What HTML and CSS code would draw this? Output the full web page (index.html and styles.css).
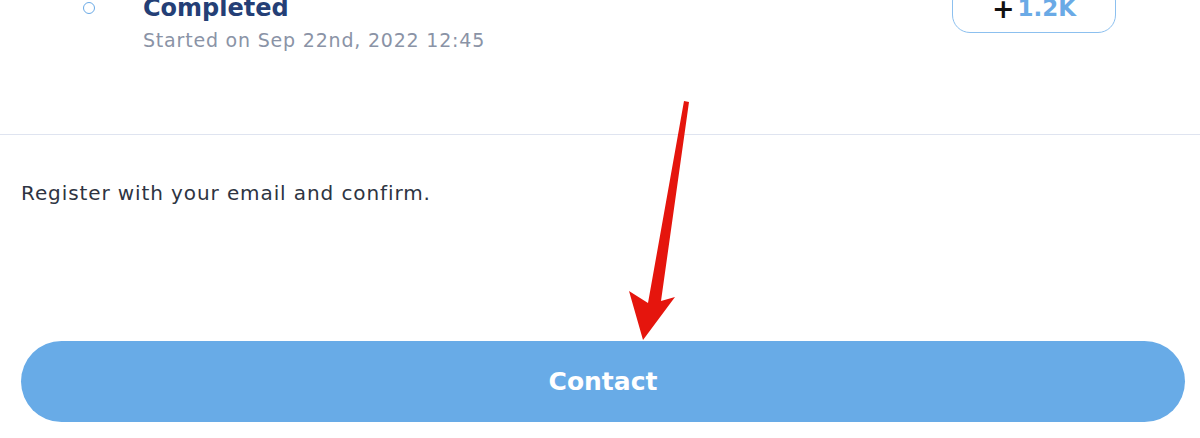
FILE: index.html
```html
<!DOCTYPE html>
<html>
<head>
<meta charset="utf-8">
<link rel="stylesheet" href="styles.css">
</head>
<body>
<div class="page">
  <section class="timeline">
    <div class="step">
      <span class="dot"></span>
      <div class="step-text">
        <div class="step-title">Completed</div>
        <div class="step-date">Started on Sep 22nd, 2022 12:45</div>
      </div>
      <button class="count"><span class="plus">+</span>1.2K</button>
    </div>
  </section>
  <section class="info">
    <p class="desc">Register with your email and confirm.</p>
    <button class="contact">Contact</button>
  </section>
  <svg class="arrow" width="1200" height="438" viewBox="0 0 1200 438">
    <polygon fill="#e5150d" points="684,101 689,102 661,301 675,297 643,340 629,291 648,303"/>
  </svg>
</div>
</body>
</html>
```
FILE: styles.css
```css
* { box-sizing: border-box; }
html, body { margin: 0; padding: 0; background: #fff; }
body { font-family: "DejaVu Sans", "Open Sans", sans-serif; overflow: hidden; }
.page { position: relative; width: 1200px; height: 438px; overflow: hidden; }
.timeline { display: flow-root; height: 135px; border-bottom: 1.5px solid #dfe4f0; }
.step { display: flex; align-items: flex-start; margin-top: -7px; padding-left: 83px; padding-right: 84px; }
.dot { width: 12px; height: 12px; border: 1.5px solid #6aaae6; border-radius: 50%; margin-top: 9px; flex: none; }
.step-text { margin-left: 48px; flex: 1; }
.step-title { font-size: 24px; font-weight: 600; color: #243f76; line-height: 30px; }
.step-date { font-size: 19px; letter-spacing: 0.8px; color: #8a93a6; line-height: 26px; margin-top: 4px; }
.count { width: 164px; height: 50px; margin-top: -10px; border: 1.5px solid #8cc0ef; border-radius: 18px; background: #fff; font-family: inherit; font-size: 23px; font-weight: 700; color: #6aaae6; display: flex; align-items: center; justify-content: center; padding: 0; }
.plus { color: #111; font-size: 27px; font-weight: 800; margin-right: 3px; line-height: 1; }
.info { padding: 44px 15px 0 21px; }
.desc { margin: 0; font-size: 20px; letter-spacing: 0.9px; color: #2e3442; line-height: 28px; }
.contact { display: block; margin-top: 134px; width: 1164px; height: 81px; border: none; border-radius: 41px; background: #68abe7; color: #fff; font-family: inherit; font-size: 25px; font-weight: 600; padding: 0; }
.arrow { position: absolute; left: 0; top: 0; pointer-events: none; }
```
